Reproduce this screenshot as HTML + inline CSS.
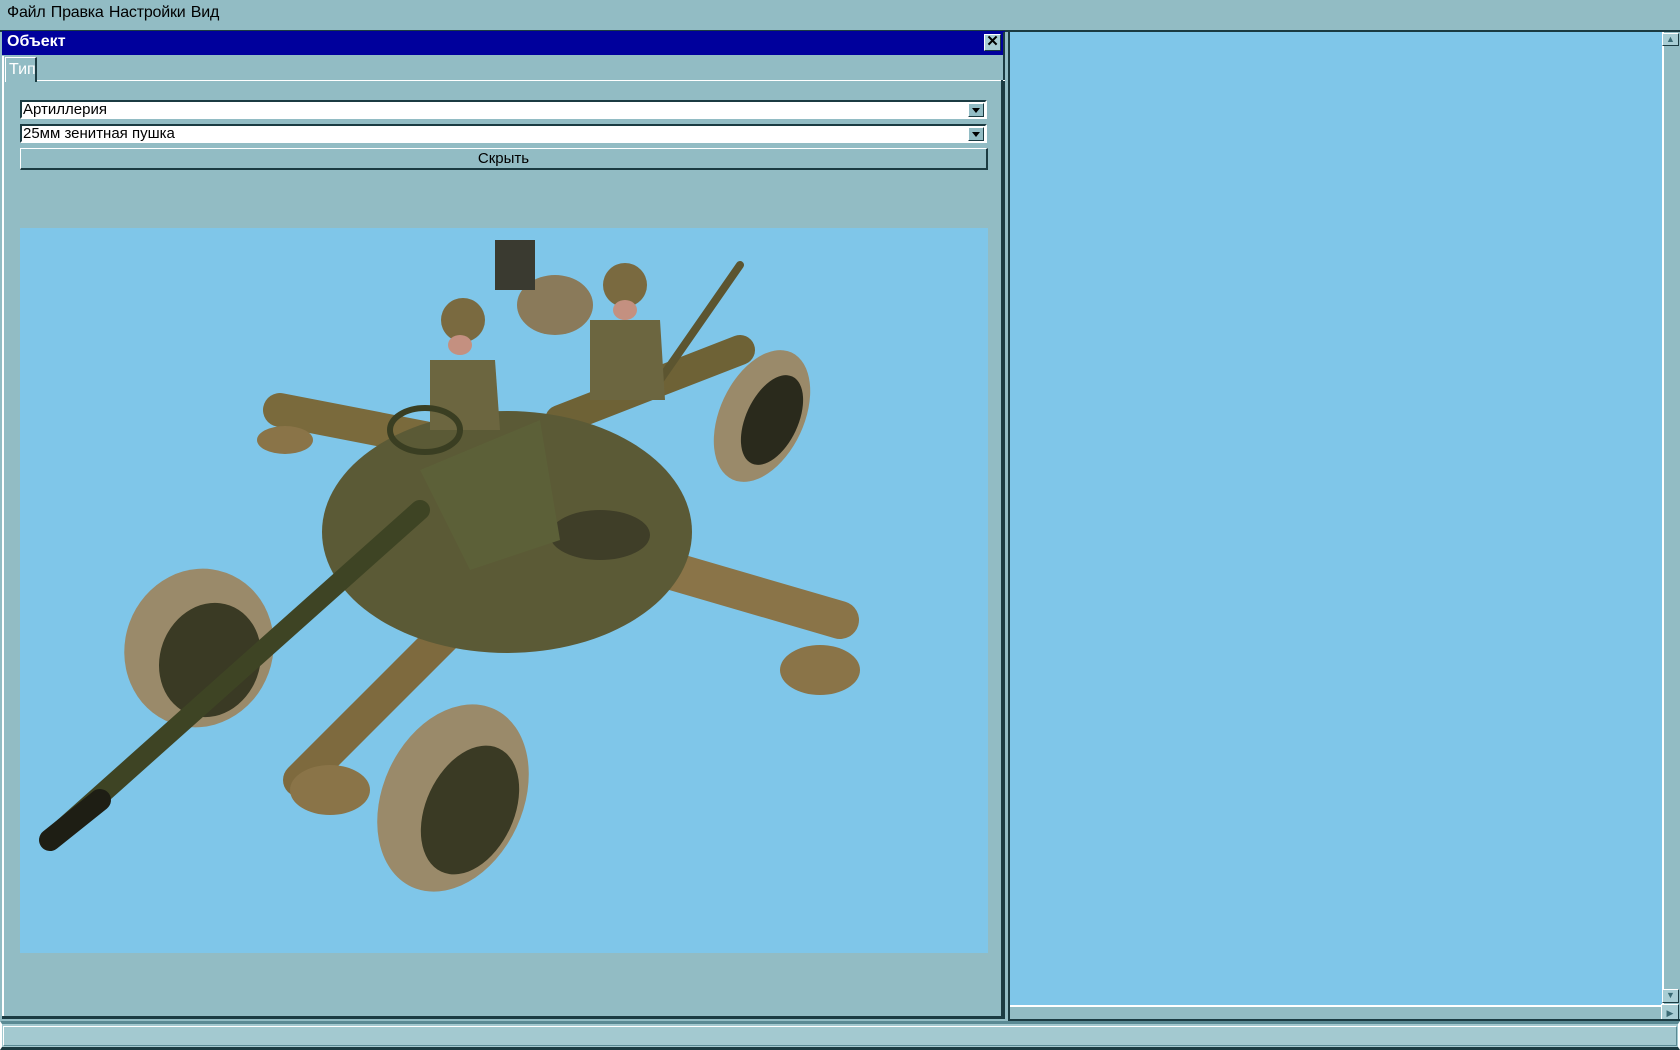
<!DOCTYPE html>
<html><head><meta charset="utf-8"><style>
*{margin:0;padding:0;box-sizing:border-box}
body{width:1680px;height:1050px;background:#92bcc4;font-family:"Liberation Sans",sans-serif;position:relative;overflow:hidden}
.a{position:absolute}
.menu{top:4px;left:7px;font-size:16px;color:#000;word-spacing:1px;letter-spacing:-0.2px}
.title{left:2px;top:31px;width:1003px;height:24px;background:#00009c;color:#fff;font-weight:bold;font-size:16px;padding:2px 5px}
.close{left:984px;top:34px;width:17px;height:17px;background:#a8cdd4;border:1px solid #fff;border-right-color:#1b3b42;border-bottom-color:#1b3b42;font-size:15px;line-height:14px;text-align:center;font-weight:bold;color:#000}
.combo{left:20px;width:967px;height:19px;background:#fff;border:2px solid #1b3b42;border-right-color:#fff;border-bottom-color:#fff;font-size:15px;line-height:15px;padding-left:1px}
.dd{position:absolute;right:1px;top:1px;width:16px;height:14px;background:#92bcc4;border:1px solid #fff;border-right-color:#1b3b42;border-bottom-color:#1b3b42}
.dd:after{content:"";position:absolute;left:3px;top:4px;border:4px solid transparent;border-top:5px solid #000}
.btn{left:20px;top:148px;width:968px;height:22px;border:1px solid #fff;border-right:2px solid #1b3b42;border-bottom:2px solid #1b3b42;text-align:center;font-size:15px;line-height:19px}
.sb{background:#a8cdd4;border:1px solid #fff;border-right-color:#1b3b42;border-bottom-color:#1b3b42;font-size:9px;line-height:11px;text-align:center;color:#3a6a74}
</style></head><body>
<div class="a menu">Файл Правка Настройки Вид</div>
<div class="a" style="left:0;top:30px;width:1680px;height:2px;background:#1b3b42"></div>
<div class="a title">Объект</div>
<div class="a close">✕</div>
<div class="a" style="left:2px;top:56px;width:2px;height:961px;background:#fff"></div>
<div class="a" style="left:2px;top:1016px;width:1003px;height:3px;background:#1b3b42"></div>
<div class="a" style="left:1003px;top:32px;width:2px;height:987px;background:#1b3b42"></div>
<div class="a" style="left:1008px;top:32px;width:2px;height:987px;background:#1b3b42"></div>
<div class="a" style="left:5px;top:57px;width:32px;height:25px;border-left:1px solid #fff;border-top:1px solid #fff;border-right:2px solid #1b3b42;color:#fff;font-size:16px;padding:3px 0 0 3px">Тип</div>
<div class="a" style="left:37px;top:80px;width:968px;height:1px;background:#fff"></div>
<div class="a" style="left:1001px;top:80px;width:2px;height:938px;background:#1b3b42"></div>
<div class="a combo" style="top:100px">Артиллерия<div class="dd"></div></div>
<div class="a combo" style="top:124px">25мм зенитная пушка<div class="dd"></div></div>
<div class="a btn">Скрыть</div>
<div class="a" style="left:20px;top:228px;width:968px;height:725px;background:#7fc6e9;overflow:hidden">
<svg width="968" height="725" viewBox="20 228 968 725">
<g stroke-linecap="round">
<line x1="280" y1="410" x2="640" y2="480" stroke="#7a6a3c" stroke-width="34"/>
<line x1="600" y1="550" x2="840" y2="620" stroke="#8a7448" stroke-width="38"/>
<line x1="300" y1="780" x2="470" y2="610" stroke="#7e6a3e" stroke-width="34"/>
<line x1="560" y1="420" x2="740" y2="350" stroke="#6e6236" stroke-width="30"/>
<line x1="660" y1="380" x2="740" y2="265" stroke="#5c5530" stroke-width="8"/>
</g>
<ellipse cx="507" cy="532" rx="185" ry="121" fill="#5b5a36"/>
<ellipse cx="600" cy="535" rx="50" ry="25" fill="#3f3e28"/>
<g>
<ellipse cx="199" cy="648" rx="74" ry="80" fill="#9a8a6a" transform="rotate(20 199 648)"/>
<ellipse cx="210" cy="660" rx="50" ry="58" fill="#3a3a24" transform="rotate(20 210 660)"/>
<ellipse cx="453" cy="798" rx="70" ry="98" fill="#9a8a6a" transform="rotate(25 453 798)"/>
<ellipse cx="470" cy="810" rx="44" ry="68" fill="#3a3a24" transform="rotate(25 470 810)"/>
<ellipse cx="762" cy="416" rx="42" ry="70" fill="#9a8a6a" transform="rotate(25 762 416)"/>
<ellipse cx="772" cy="420" rx="26" ry="48" fill="#2a2a1c" transform="rotate(25 772 420)"/>
<ellipse cx="555" cy="305" rx="38" ry="30" fill="#8a7a5a"/>
<ellipse cx="285" cy="440" rx="28" ry="14" fill="#8a7448"/>
<ellipse cx="330" cy="790" rx="40" ry="25" fill="#8a7448"/>
<ellipse cx="820" cy="670" rx="40" ry="25" fill="#8a7448"/>
</g>
<line x1="50" y1="840" x2="420" y2="510" stroke="#3e4424" stroke-width="20" stroke-linecap="round"/>
<line x1="50" y1="840" x2="100" y2="800" stroke="#1e1e14" stroke-width="22" stroke-linecap="round"/>
<polygon points="420,470 540,420 560,540 470,570" fill="#5c6038"/>
<rect x="495" y="240" width="40" height="50" fill="#3a3a30"/>
<ellipse cx="463" cy="320" rx="22" ry="22" fill="#7a6a40"/>
<ellipse cx="460" cy="345" rx="12" ry="10" fill="#c49080"/>
<path d="M430 360 L495 360 L500 430 L430 430 Z" fill="#6c6640"/>
<ellipse cx="625" cy="285" rx="22" ry="22" fill="#7a6a40"/>
<ellipse cx="625" cy="310" rx="12" ry="10" fill="#c49080"/>
<path d="M590 320 L660 320 L665 400 L590 400 Z" fill="#6c6640"/>
<ellipse cx="425" cy="430" rx="35" ry="22" fill="none" stroke="#3a3e22" stroke-width="6"/>
</svg></div>
<div class="a" style="left:1010px;top:32px;width:652px;height:974px;background:#7fc6e9"></div>
<div class="a" style="left:1662px;top:32px;width:18px;height:974px;background:#92bcc4;border-left:2px solid #fff"></div>
<div class="a sb" style="left:1662px;top:33px;width:17px;height:13px">▲</div>
<div class="a sb" style="left:1662px;top:989px;width:17px;height:14px">▼</div>
<div class="a" style="left:1010px;top:1005px;width:652px;height:14px;background:#92bcc4;border-top:2px solid #fff"></div>
<div class="a sb" style="left:1661px;top:1004px;width:18px;height:18px;line-height:16px">▶</div>
<div class="a" style="left:1008px;top:1019px;width:672px;height:2px;background:#1b3b42"></div>
<div class="a" style="left:0;top:1021px;width:1680px;height:29px;background:#a3c9d0;border:2px solid #fff;border-top:3px solid #5a8a94;border-bottom:3px solid #1b3b42"></div>
<div class="a" style="left:3px;top:1026px;width:1674px;height:20px;border:1px solid #fff;border-bottom-color:#5a8a94;border-right-color:#5a8a94"></div>
</body></html>
